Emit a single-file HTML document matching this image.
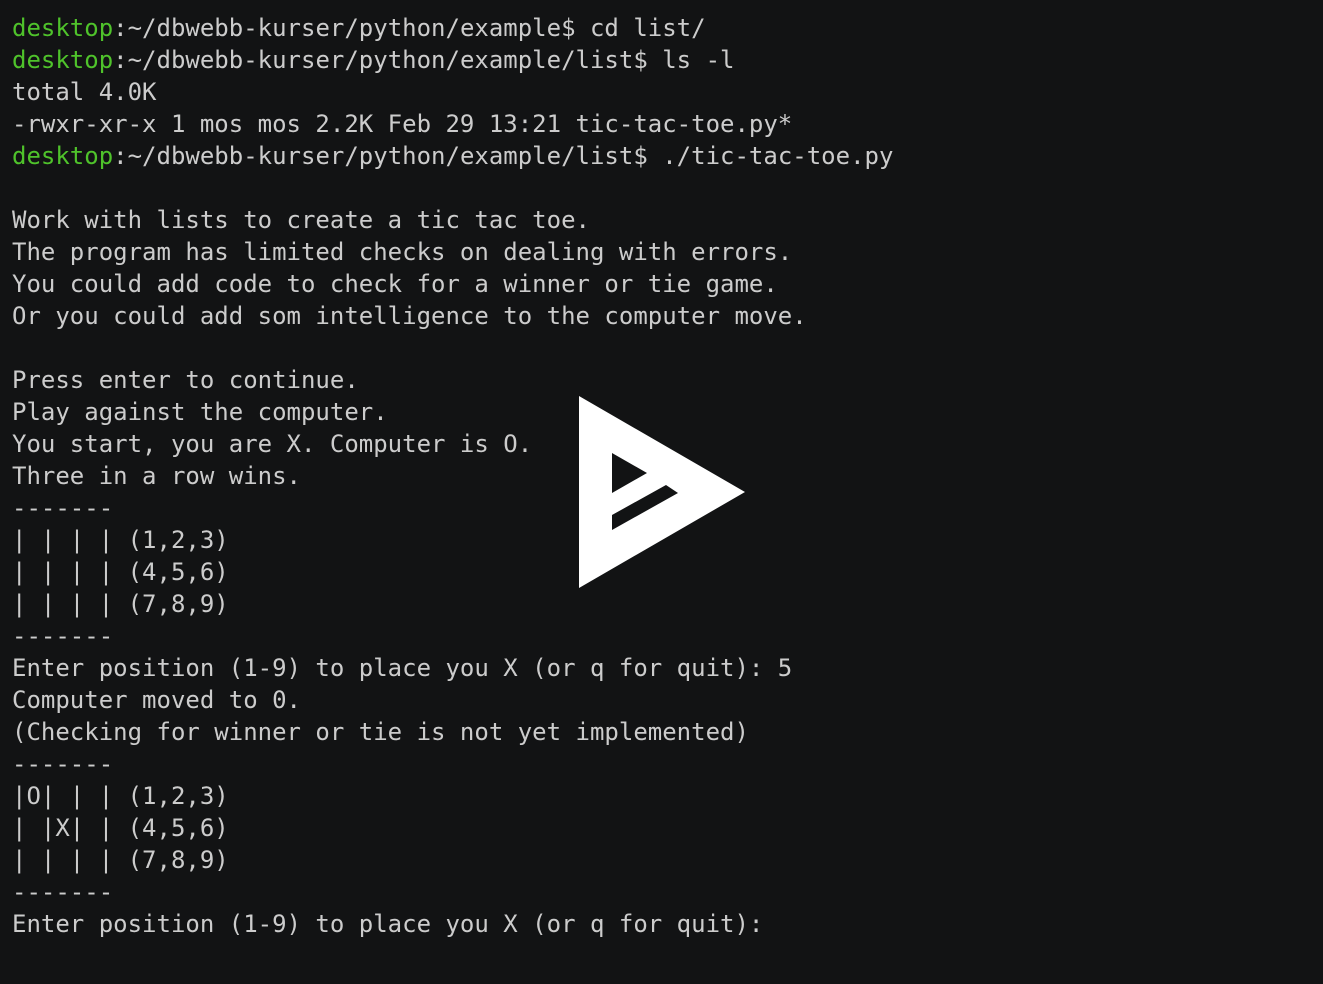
<!DOCTYPE html>
<html><head><meta charset="utf-8"><style>
html,body{margin:0;padding:0;background:#121314;width:1323px;height:984px;overflow:hidden}
pre{margin:0;position:absolute;left:12px;top:12px;font-family:"DejaVu Sans Mono","Liberation Mono",monospace;font-size:24px;line-height:32px;color:#cccccc;white-space:pre}
.g{color:#4fc32b}
svg{position:absolute;left:0;top:0}
</style></head><body>
<pre><span class="g">desktop</span>:~/dbwebb-kurser/python/example$ cd list/
<span class="g">desktop</span>:~/dbwebb-kurser/python/example/list$ ls -l
total 4.0K
-rwxr-xr-x 1 mos mos 2.2K Feb 29 13:21 tic-tac-toe.py*
<span class="g">desktop</span>:~/dbwebb-kurser/python/example/list$ ./tic-tac-toe.py

Work with lists to create a tic tac toe.
The program has limited checks on dealing with errors.
You could add code to check for a winner or tie game.
Or you could add som intelligence to the computer move.

Press enter to continue.
Play against the computer.
You start, you are X. Computer is O.
Three in a row wins.
-------
| | | | (1,2,3)
| | | | (4,5,6)
| | | | (7,8,9)
-------
Enter position (1-9) to place you X (or q for quit): 5
Computer moved to 0.
(Checking for winner or tie is not yet implemented)
-------
|O| | | (1,2,3)
| |X| | (4,5,6)
| | | | (7,8,9)
-------
Enter position (1-9) to place you X (or q for quit):
</pre>
<svg width="1323" height="984" viewBox="0 0 1323 984">
<path fill="#fff" fill-rule="evenodd" d="M579 396 L745 492 L579 588 Z M612 453 L647 473 L612 493 Z M612 515 L666 485 L678 493 L612 530 Z"/>
</svg>
</body></html>
